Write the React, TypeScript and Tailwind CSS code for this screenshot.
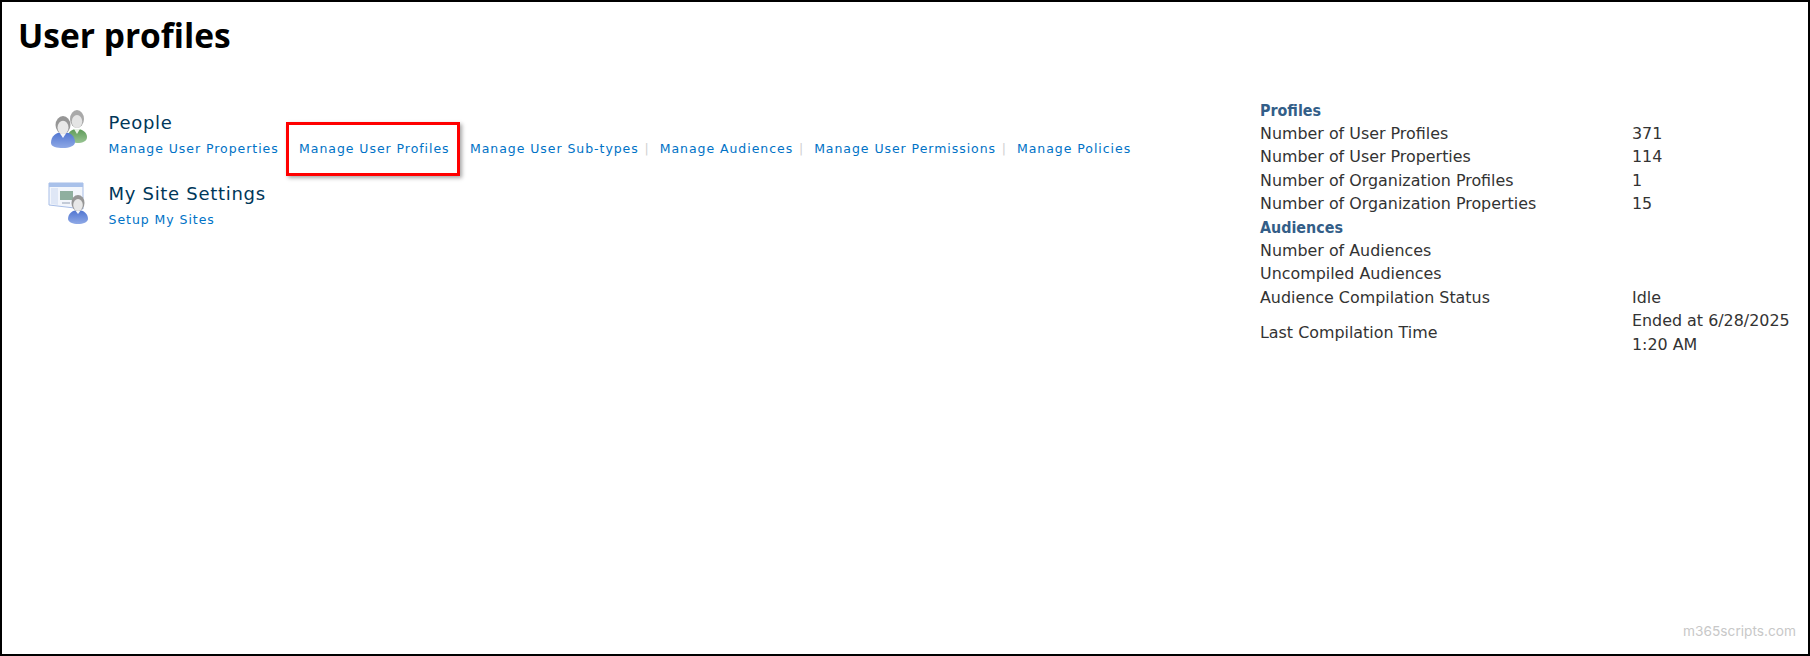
import React from 'react';

const verdana = "font-['DejaVu_Sans',sans-serif]";

const PeopleIcon = () => (
  <svg width="40" height="40" viewBox="0 0 40 40" className="blur-[0.5px]">
    <defs>
      <linearGradient id="blue" x1="0" y1="0" x2="0" y2="1">
        <stop offset="0" stopColor="#4f74d0" />
        <stop offset="1" stopColor="#8fa9e6" />
      </linearGradient>
      <linearGradient id="green" x1="0" y1="0" x2="0" y2="1">
        <stop offset="0" stopColor="#5d9a58" />
        <stop offset="1" stopColor="#98c492" />
      </linearGradient>
    </defs>
    <path d="M18 28c0-4 4-7 9-7s10 3 10 8c0 4-4 6-10 6-5 0-9-3-9-7z" fill="url(#green)" />
    <path d="M24 21l3 5 3-5z" fill="#e9f2e6" />
    <ellipse cx="27" cy="11" rx="7" ry="9" fill="#a9a9a9" />
    <ellipse cx="27" cy="13.5" rx="5.2" ry="6.5" fill="#e4e4e4" />
    <path d="M1 35c0-7 5-11 12-11s12 4 12 10c0 4-6 6-12 6S1 39 1 35z" fill="url(#blue)" />
    <path d="M9 24l4 6 4-6z" fill="#f4f6fc" />
    <ellipse cx="13" cy="17" rx="7.5" ry="9" fill="#969696" />
    <ellipse cx="13" cy="19.5" rx="5.5" ry="6.8" fill="#e8e8e8" />
  </svg>
);

const SiteIcon = () => (
  <svg width="42" height="42" viewBox="0 0 42 42" className="blur-[0.5px]">
    <defs>
      <linearGradient id="blue2" x1="0" y1="0" x2="0" y2="1">
        <stop offset="0" stopColor="#4f74d0" />
        <stop offset="1" stopColor="#8fa9e6" />
      </linearGradient>
    </defs>
    <path d="M1 1h34v26L1 23z" fill="#f3f6fc" stroke="#a7bde6" />
    <rect x="1" y="1" width="34" height="4" fill="#a9c1ea" />
    <path d="M3 6h7v17l-7-1z" fill="#dfe7f6" />
    <rect x="12" y="9" width="13" height="9" fill="#8faf9f" />
    <rect x="14" y="20" width="8" height="2" fill="#c3cbd8" />
    <path d="M20 37c0-5 4-9 10-9s10 4 10 9c0 3-5 5-10 5s-10-2-10-5z" fill="url(#blue2)" />
    <path d="M27 28l3 4 3-4z" fill="#f4f6fc" />
    <ellipse cx="30" cy="21" rx="6.5" ry="8" fill="#969696" />
    <ellipse cx="30" cy="23" rx="4.8" ry="6" fill="#e8e8e8" />
  </svg>
);

const links = [
  { label: 'Manage User Properties', sep: false },
  { label: 'Manage User Profiles', sep: false, boxed: true },
  { label: 'Manage User Sub-types', sep: true },
  { label: 'Manage Audiences', sep: true },
  { label: 'Manage User Permissions', sep: true },
  { label: 'Manage Policies', sep: false },
];

const stats = [
  { label: 'Profiles', head: true },
  { label: 'Number of User Profiles', value: '371' },
  { label: 'Number of User Properties', value: '114' },
  { label: 'Number of Organization Profiles', value: '1' },
  { label: 'Number of Organization Properties', value: '15' },
  { label: 'Audiences', head: true },
  { label: 'Number of Audiences' },
  { label: 'Uncompiled Audiences' },
  { label: 'Audience Compilation Status', value: 'Idle' },
];

export default function App() {
  return (
    <div className="relative w-[1810px] h-[656px] bg-white border-2 border-black overflow-hidden">
      <h1 className="pl-[16px] pt-[11px] text-[33.5px] leading-[44px] font-bold text-black font-['Open_Sans',sans-serif]">
        User profiles
      </h1>

      <div className="flex justify-between pt-[41px]">
        {/* Left sections */}
        <div className="pl-[46px] pt-[10px] flex flex-col gap-[22px]">
          <div className="flex gap-[18.5px]">
            <div className="w-[42px] pl-[2px]"><PeopleIcon /></div>
            <div className={`${verdana} pt-[3px]`}>
              <div className="text-[18px] leading-[24px] text-[#003759] tracking-[0.7px]">People</div>
              <div className="flex mt-[6px] text-[12.5px] leading-[16px] text-[#0072c6] tracking-[0.95px]">
                {links.map(l => (
                  <a
                    key={l.label}
                    className={`relative whitespace-nowrap ${l.sep ? "mr-[21px] after:content-['|'] after:absolute after:right-[-11px] after:text-[#d0d0d0]" : 'mr-[20.4px]'}`}
                  >
                    {l.label}
                    {l.boxed && (
                      <span className="absolute left-[-13px] right-[-10px] top-[-19px] h-[54px] border-[3px] border-[#ff0000] shadow-[2px_2px_4px_rgba(0,0,0,0.35)]" />
                    )}
                  </a>
                ))}
              </div>
            </div>
          </div>
          <div className="flex gap-[18.5px]">
            <div className="w-[42px] pt-[3px]"><SiteIcon /></div>
            <div className={`${verdana} pt-[3px]`}>
              <div className="text-[18px] leading-[24px] text-[#003759] tracking-[0.7px]">My Site Settings</div>
              <a className="block mt-[6px] text-[12.5px] leading-[16px] text-[#0072c6] tracking-[0.95px]">Setup My Sites</a>
            </div>
          </div>
        </div>

        {/* Right stats */}
        <div className="w-[548px] pt-[0.5px] text-[15.9px] leading-[23.4px] text-[#333333] font-['DejaVu_Sans',sans-serif]">
          {stats.map(s =>
            s.head ? (
              <div key={s.label} className="font-bold text-[#335e88] font-['DejaVu_Sans_Condensed','DejaVu_Sans',sans-serif]">{s.label}</div>
            ) : (
              <div key={s.label} className="flex">
                <div className="w-[372px]">{s.label}</div>
                <div>{s.value}</div>
              </div>
            )
          )}
          <div className="flex items-center">
            <div className="w-[372px]">Last Compilation Time</div>
            <div>Ended at 6/28/2025<br />1:20 AM</div>
          </div>
        </div>
      </div>

      <div className="absolute right-[12px] bottom-[12px] text-[13.7px] text-[#c8c8c8] font-['Inter',sans-serif]">m365scripts.com</div>
    </div>
  );
}
